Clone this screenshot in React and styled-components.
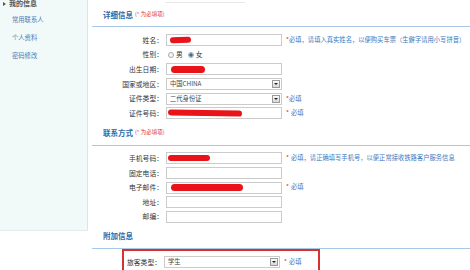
import React from 'react';
import styled, { createGlobalStyle } from 'styled-components';

const GlobalStyle = createGlobalStyle`
  html, body {
    margin: 0;
    padding: 0;
    background: #ffffff;
  }
  body {
    width: 470px;
    height: 270px;
    overflow: hidden;
    font-family: "Noto Sans CJK SC", "Noto Sans", sans-serif;
  }
`;

const Page = styled.div`
  display: flex;
  align-items: flex-start;
  width: 470px;
  height: 270px;
`;

// left menu
const Sidebar = styled.div`
  width: 87px;
  height: 230px;
  flex-shrink: 0;
  background: #f2f9f9;
  border-right: 1px solid #dbe6e8;
  border-bottom: 1px solid #e2ebed;
  display: flex;
  flex-direction: column;
`;

const SideHead = styled.div`
  display: flex;
  align-items: center;
  gap: 3px;
  margin-top: -1px;
  padding-left: 3px;
  height: 9px;
  font-size: 7px;
  font-weight: bold;
  color: #555;
  line-height: 1;
`;

const Arrow = styled.span`
  width: 0;
  height: 0;
  border-top: 2.5px solid transparent;
  border-bottom: 2.5px solid transparent;
  border-left: 3px solid #555;
`;

const SideList = styled.ul`
  list-style: none;
  margin: 0;
  padding: 8px 0 0 12px;
  display: flex;
  flex-direction: column;
  gap: 11px;
`;

const SideItem = styled.li`
  font-size: 6.3px;
  line-height: 7px;
  color: #4a7db4;
`;

// main form
const Main = styled.div`
  flex: 1;
  padding-left: 4px;
  display: flex;
  flex-direction: column;
`;

const TopRule = styled.div`
  margin: 2px 0 0 73px;
  width: 80px;
  height: 1px;
  background: #e8e8e8;
`;

const SectionHead = styled.div`
  display: flex;
  align-items: center;
  height: ${p => p.$h || 23}px;
  padding-left: 11px;
  border-bottom: 1px solid #a8c8e5;
  line-height: 1;
`;

const Title = styled.span`
  font-size: 7.5px;
  font-weight: bold;
  color: #2d6aa8;
`;

const Note = styled.span`
  margin-left: 2px;
  font-size: 5.5px;
  color: #e3302b;
`;

const Rows = styled.div`
  display: flex;
  flex-direction: column;
  margin-top: ${p => p.$top || 6}px;
`;

const Row = styled.div`
  display: grid;
  grid-template-columns: ${p => p.$labelWidth || 71}px 116px auto;
  column-gap: 3px;
  align-items: center;
  height: 14.6px;
`;

const Label = styled.span`
  text-align: right;
  font-size: 6.8px;
  line-height: 1;
  color: #333;
  white-space: nowrap;
`;

const Field = styled.div`
  box-sizing: border-box;
  height: 12px;
  border: 1px solid #cbcbcb;
  background: #fff;
  display: flex;
  align-items: center;
  padding-left: 3px;
  font-size: 6.3px;
  line-height: 1;
  color: #444;
  font-family: "Noto Sans CJK SC", "Liberation Sans", sans-serif;
`;

const DropButton = styled.span`
  margin-left: auto;
  margin-right: 1px;
  box-sizing: border-box;
  width: 8px;
  height: 8px;
  border: 1px solid #9a9a9a;
  background: linear-gradient(#fbfbfb, #d8d8d8);
  display: flex;
  align-items: center;
  justify-content: center;

  &::after {
    content: "";
    border-left: 2px solid transparent;
    border-right: 2px solid transparent;
    border-top: 2px solid #222;
  }
`;

const Scribble = styled.span`
  display: block;
  width: ${p => p.$w}px;
  height: ${p => p.$h || 6}px;
  margin-left: ${p => p.$x || 0}px;
  background: #e8141a;
  border-radius: 4px;
  transform: rotate(${p => p.$r || 0}deg);
`;

const Radios = styled.div`
  display: flex;
  align-items: center;
  gap: 2px;
  padding-left: 2px;
  font-size: 6.8px;
  line-height: 1;
  color: #333;
`;

const Radio = styled.span`
  box-sizing: border-box;
  width: 6px;
  height: 6px;
  border-radius: 50%;
  border: 1px solid #a9a9a9;
  background: ${p => (p.$on ? 'radial-gradient(circle, #3d6f96 0 1.5px, #e8eef3 1.8px)' : '#f6f6f6')};
  margin-left: ${p => (p.$gap ? 3 : 0)}px;
`;

const Hint = styled.span`
  margin-left: 1px;
  font-size: 6.3px;
  line-height: 1;
  color: #3b79bf;
  white-space: nowrap;

  b {
    color: #e3302b;
    font-weight: normal;
    margin-right: ${p => (p.$tight ? 0 : 2)}px;
  }
`;

const HighlightBox = styled.div`
  margin: 0 0 0 30px;
  width: 198px;
  height: 30px;
  box-sizing: border-box;
  border: 2px solid #d8322e;
  border-bottom: none;
  padding-top: 4px;
`;

function Required({ text = '必填', tight }) {
  return (
    <Hint $tight={tight}>
      <b>*</b>
      {text}
    </Hint>
  );
}

export default function App() {
  return (
    <Page>
      <GlobalStyle />
      <Sidebar>
        <SideHead>
          <Arrow />
          我的信息
        </SideHead>
        <SideList>
          <SideItem>常用联系人</SideItem>
          <SideItem>个人资料</SideItem>
          <SideItem>密码修改</SideItem>
        </SideList>
      </Sidebar>

      <Main>
        <TopRule />
        <SectionHead>
          <Title>详细信息</Title>
          <Note>(* 为必填项)</Note>
        </SectionHead>
        <Rows>
          <Row>
            <Label>姓名：</Label>
            <Field>
              <Scribble $w={21} $h={6} $r={-2} />
            </Field>
            <Required tight text="必填，请填入真实姓名，以便购买车票（生僻字请用小写拼音）" />
          </Row>
          <Row>
            <Label>性别：</Label>
            <Radios>
              <Radio />男
              <Radio $on $gap />女
            </Radios>
          </Row>
          <Row>
            <Label>出生日期：</Label>
            <Field>
              <Scribble $w={34} $h={7} $x={1} />
            </Field>
          </Row>
          <Row>
            <Label>国家或地区：</Label>
            <Field>
              中国CHINA
              <DropButton />
            </Field>
          </Row>
          <Row>
            <Label>证件类型：</Label>
            <Field>
              二代身份证
              <DropButton />
            </Field>
            <Required tight />
          </Row>
          <Row>
            <Label>证件号码：</Label>
            <Field>
              <Scribble $w={74} $h={6} $x={-2} $r={1} />
            </Field>
            <Required />
          </Row>
        </Rows>

        <SectionHead $h={24}>
          <Title>联系方式</Title>
          <Note>(* 为必填项)</Note>
        </SectionHead>
        <Rows $top={5.6}>
          <Row>
            <Label>手机号码：</Label>
            <Field>
              <Scribble $w={42} $h={6} $x={-2} />
            </Field>
            <Required text="必填，请正确填写手机号，以便正常接收铁路客户服务信息" />
          </Row>
          <Row>
            <Label>固定电话：</Label>
            <Field />
          </Row>
          <Row>
            <Label>电子邮件：</Label>
            <Field>
              <Scribble $w={72} $h={7} $x={1} />
            </Field>
            <Required />
          </Row>
          <Row>
            <Label>地址：</Label>
            <Field />
          </Row>
          <Row>
            <Label>邮编：</Label>
            <Field />
          </Row>
        </Rows>

        <SectionHead $h={24}>
          <Title>附加信息</Title>
        </SectionHead>
        <HighlightBox>
          <Row $labelWidth={37}>
            <Label>旅客类型：</Label>
            <Field>
              学生
              <DropButton />
            </Field>
            <Required />
          </Row>
        </HighlightBox>
      </Main>
    </Page>
  );
}
